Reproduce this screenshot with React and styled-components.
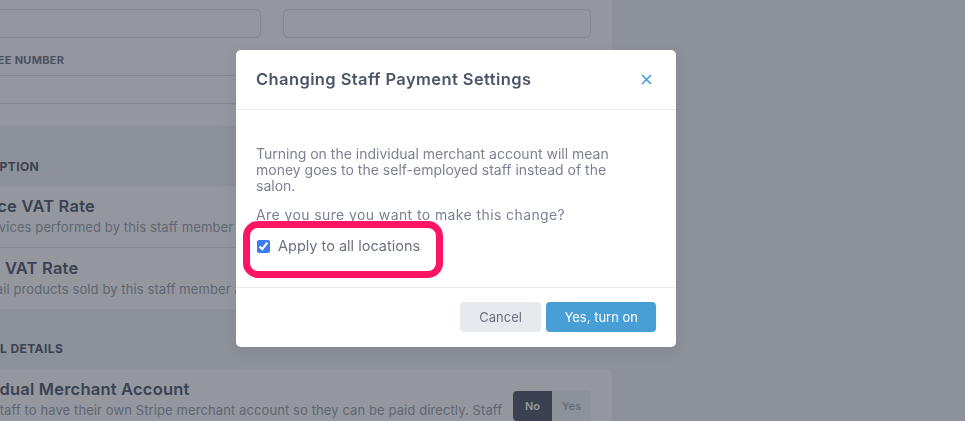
import styled, { createGlobalStyle } from "styled-components";

const GlobalStyle = createGlobalStyle`
  * {
    box-sizing: border-box;
  }

  body {
    margin: 0;
    background: #f3f4f6;
    font-family: Inter, "Noto Sans", "Liberation Sans", sans-serif;
    overflow: hidden;
  }
`;

const Page = styled.main`
  width: 677px;
  margin: -33px 0 0 -65px;
  display: flex;
  flex-direction: column;
`;

const Card = styled.section`
  background: #ffffff;
  border-radius: 5px;
`;

const FieldCard = styled(Card)`
  padding: 20px 21px 22px 15px;
  display: grid;
  grid-template-columns: 1fr 308px;
  column-gap: 22px;
  row-gap: 15px;
`;

const Field = styled.div`
  display: flex;
  flex-direction: column;
  gap: 8px;
  grid-column: ${(p) => (p.$wide ? "1 / -1" : "auto")};
`;

const FieldLabel = styled.label`
  font-size: 11px;
  line-height: 14px;
  font-weight: 700;
  letter-spacing: 0.3px;
  color: #7a8194;
  text-transform: uppercase;
`;

const Input = styled.div`
  height: 29px;
  border: 1px solid #e2e5ea;
  border-radius: 5px;
  background: #ffffff;
`;

const SectionTitle = styled.h3`
  margin: 0;
  padding: ${(p) => p.$pad || "34px 20px 12px 0"};
  font-size: 12px;
  line-height: 14px;
  font-weight: 700;
  letter-spacing: 0.4px;
  color: #5d6577;
  text-transform: uppercase;
`;

const SettingRow = styled.div`
  display: flex;
  align-items: center;
  justify-content: space-between;
  gap: 8px;
  padding: 10px 21px 11px 20px;
  border-top: ${(p) => (p.$divided ? "1px solid #e5e7eb" : "none")};
`;

const SettingText = styled.div`
  display: flex;
  flex-direction: column;
  gap: 2px;
  max-width: ${(p) => p.$max || "none"};
`;

const SettingName = styled.div`
  font-size: 16.5px;
  line-height: 20px;
  font-weight: 600;
  letter-spacing: 0.2px;
  color: #5d6577;
  white-space: nowrap;
`;

const SettingDesc = styled.div`
  font-size: 13px;
  line-height: 18px;
  letter-spacing: 0.1px;
  color: #a0a6b4;
  white-space: ${(p) => (p.$wrap ? "normal" : "nowrap")};
`;

const Toggle = styled.div`
  display: flex;
  flex-shrink: 0;
  margin-top: -4px;
  border-radius: 4px;
  overflow: hidden;
  background: #f3f4f6;
`;

const ToggleOption = styled.button`
  width: 39px;
  height: 30px;
  border: none;
  font-family: inherit;
  font-size: 11px;
  font-weight: 600;
  background: ${(p) => (p.$active ? "#5b6475" : "transparent")};
  color: ${(p) => (p.$active ? "#ffffff" : "#b0b5c0")};
`;

const Overlay = styled.div`
  position: fixed;
  inset: 0;
  background: rgba(17, 24, 39, 0.45);
  display: flex;
  align-items: flex-start;
  padding: 50px 0 0 236px;
`;

const Modal = styled.div`
  width: 440px;
  background: #ffffff;
  border-radius: 5px;
  box-shadow: 0 4px 16px rgba(0, 0, 0, 0.08);
`;

const ModalHeader = styled.header`
  height: 60px;
  display: flex;
  align-items: center;
  justify-content: space-between;
  padding: 0 24px 1px 20px;
  border-bottom: 1px solid #e8eaee;
`;

const ModalTitle = styled.h2`
  margin: 0;
  font-size: 16.5px;
  font-weight: 600;
  letter-spacing: 0.4px;
  color: #4a5568;
`;

const CloseButton = styled.button`
  display: flex;
  padding: 0;
  border: none;
  background: none;
  color: #4a9fd8;
`;

const ModalBody = styled.div`
  padding: 36px 20px 31px;
  font-size: 14px;
  line-height: 16px;
  color: #7b8294;
`;

const Paragraph = styled.p`
  margin: 0 0 13px;
  max-width: ${(p) => p.$max || "none"};
  letter-spacing: ${(p) => p.$spacing || "0"};
`;

const CheckRow = styled.label`
  position: relative;
  display: flex;
  align-items: center;
  gap: 8px;
  height: 20px;
  margin-top: 12px;
  font-size: 14.5px;
  color: #6b7280;
`;

const Checkbox = styled.input`
  width: 13px;
  height: 13px;
  margin: 0 0 0 1px;
  accent-color: #3b7cf0;
`;

const Highlight = styled.span`
  position: absolute;
  left: -13px;
  top: -15px;
  width: 200px;
  height: 57px;
  border: 7px solid #fd1463;
  border-radius: 15px;
  pointer-events: none;
`;

const ModalFooter = styled.footer`
  display: flex;
  justify-content: flex-end;
  gap: 5px;
  padding: 14px 20px 15px;
  border-top: 1px solid #e8eaee;
`;

const Button = styled.button`
  height: 30px;
  padding: 0 ${(p) => (p.$primary ? "18px" : "19.5px")};
  border: none;
  border-radius: 4px;
  font-family: inherit;
  font-size: 13px;
  background: ${(p) => (p.$primary ? "#479fd6" : "#e6e9ee")};
  color: ${(p) => (p.$primary ? "#ffffff" : "#6b7280")};
`;

const CloseIcon = () => (
  <svg width="11" height="11" viewBox="0 0 11 11" fill="none">
    <path d="M1 1l9 9M10 1l-9 9" stroke="currentColor" strokeWidth="1.7" />
  </svg>
);

const App = () => {
  return (
    <>
      <GlobalStyle />
      <Page>
        <FieldCard>
          <Field>
            <FieldLabel>First name</FieldLabel>
            <Input />
          </Field>
          <Field>
            <FieldLabel>Last name</FieldLabel>
            <Input />
          </Field>
          <Field $wide>
            <FieldLabel>Employee number</FieldLabel>
            <Input />
          </Field>
        </FieldCard>

        <SectionTitle>Vat exemption</SectionTitle>
        <Card>
          <SettingRow>
            <SettingText>
              <SettingName>Service VAT Rate</SettingName>
              <SettingDesc>
                For services performed by this staff member and charged to clients
              </SettingDesc>
            </SettingText>
          </SettingRow>
          <SettingRow $divided>
            <SettingText>
              <SettingName>Retail VAT Rate</SettingName>
              <SettingDesc>
                For retail products sold by this staff member and charged to clients
              </SettingDesc>
            </SettingText>
          </SettingRow>
        </Card>

        <SectionTitle $pad="33px 20px 13px 3px">Financial details</SectionTitle>
        <Card>
          <SettingRow>
            <SettingText $max="552px">
              <SettingName>Individual Merchant Account</SettingName>
              <SettingDesc $wrap>
                Allow staff to have their own Stripe merchant account so they can be
                paid directly. Staff will manage their own payouts.
              </SettingDesc>
            </SettingText>
            <Toggle>
              <ToggleOption $active>No</ToggleOption>
              <ToggleOption>Yes</ToggleOption>
            </Toggle>
          </SettingRow>
        </Card>
      </Page>

      <Overlay>
        <Modal>
          <ModalHeader>
            <ModalTitle>Changing Staff Payment Settings</ModalTitle>
            <CloseButton aria-label="Close">
              <CloseIcon />
            </CloseButton>
          </ModalHeader>
          <ModalBody>
            <Paragraph $max="390px">
              Turning on the individual merchant account will mean money goes to the
              self-employed staff instead of the salon.
            </Paragraph>
            <Paragraph $spacing="0.4px">Are you sure you want to make this change?</Paragraph>
            <CheckRow>
              <Checkbox type="checkbox" defaultChecked />
              Apply to all locations
              <Highlight />
            </CheckRow>
          </ModalBody>
          <ModalFooter>
            <Button>Cancel</Button>
            <Button $primary>Yes, turn on</Button>
          </ModalFooter>
        </Modal>
      </Overlay>
    </>
  );
};

export default App;
